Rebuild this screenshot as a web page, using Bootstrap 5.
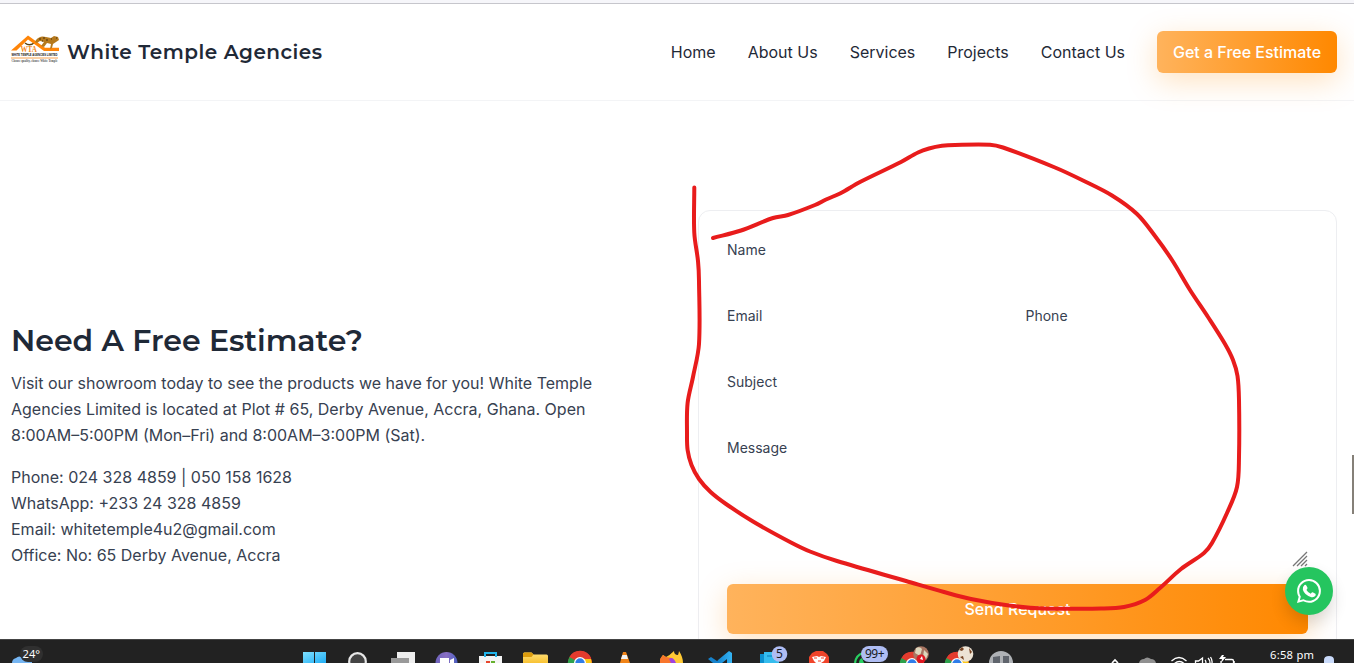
<!DOCTYPE html>
<html lang="en">
<head>
<meta charset="utf-8">
<title>White Temple Agencies</title>
<link href="https://cdn.jsdelivr.net/npm/bootstrap@5.3.0/dist/css/bootstrap.min.css" rel="stylesheet">
<style>
body{font-family:Inter,"Liberation Sans",sans-serif;color:#374151;height:663px;overflow:hidden;background:#fff;line-height:26px}
.edge{height:4px;background:#f6f6fa;border-bottom:1px solid #c6c6cc}
.site-head{height:97px;border-bottom:1px solid #f3f4f6;padding:0 17px 0 11px}
.site-head,.brand-name,h1{color:#1f2937}
.brand-name,h1{font-family:Montserrat,Inter,sans-serif;font-weight:600;white-space:nowrap}
.brand-name{font-size:20px;letter-spacing:.5px}
h1{font-size:30px;line-height:36px;margin-bottom:11px}
.logo{overflow:visible}
.links{gap:32px}
.cta{background:linear-gradient(90deg,#ffb35c,#ff8800);color:#fff;border:0;border-radius:6px;font-weight:500;box-shadow:0 8px 30px rgba(255,138,0,.25)}
.cta:hover{color:#fff}
.cta-head{width:180px;height:42px;padding:0}
.cta-send{height:50px}
.main-area{height:538px;padding:0 17px 0 11px;overflow:hidden}
.info-col{width:607px;padding-top:222px}
.form-col{width:639px;padding-top:109px}
.form-panel{border:1px solid #edeef1;border-radius:12px;padding:29px 28px;height:453px}
.form-panel label{font-size:14px;line-height:20px;height:66px;display:block}
.form-panel .msg{height:100px}
.grip{height:29px;margin-bottom:17px}
.taskbar{height:24px;background:#222;border-top:1px solid #444;position:relative}
.taskbar svg,.marker{display:block}
.marker{position:absolute;inset:0;pointer-events:none}
.chat{position:absolute;left:1285px;top:567px;width:48px;height:48px;border-radius:50%;background:#25c55f;box-shadow:0 8px 16px rgba(0,0,0,.14)}
.scroll-thumb{position:absolute;right:0;top:455px;width:2px;height:59px;background:#858078}
.taskbar text{font-family:"Noto Sans","Open Sans",sans-serif}
</style>
<script src="https://cdn.jsdelivr.net/npm/bootstrap@5.3.0/dist/js/bootstrap.bundle.min.js"></script>
</head>
<body class="position-relative">
<div class="edge"></div>
<header class="site-head d-flex align-items-center justify-content-between">
  <div class="d-flex align-items-center gap-2">
    <svg class="logo" width="48" height="48" viewBox="0 0 48 48">
      <path d="M14 15q5 4 10-1" fill="none" stroke="#5c4310" stroke-width="1.4"/>
      <path d="M0 22.500 17 7.500l17 12.300h14v3.200H33L17 11.500 5.500 22.500z" fill="#ff8508"/>
      <path d="M25 12q4-5 10-3l5 1 3-2 4 1 1 3-3 2-3 2-1 4-2 1 1-5-4-1-3 4-3-1 3-4-4-1-3 2-2-1z" fill="#b5791d"/>
      <path d="M28 11h2m2-1h2m1 2h2m3-1h1m-10 2h1m13-3h1" stroke="#49310c" stroke-width="1.1"/>
      <text x="9.500" y="24.300" font-family="Liberation Serif" font-weight="700" font-size="7.600" textLength="16.500" lengthAdjust="spacingAndGlyphs" fill="#f58a1c">WTA</text>
      <text x=".5" y="28.300" font-family="Liberation Sans" font-weight="700" font-size="3" textLength="46" lengthAdjust="spacingAndGlyphs" fill="#111">WHITE TEMPLE AGENCIES LIMITED</text>
      <path d="M0 30h47" stroke="#f7a04c" stroke-width="1"/>
      <text x=".5" y="34" font-family="Liberation Serif" font-weight="700" font-size="3.400" textLength="46" lengthAdjust="spacingAndGlyphs" fill="#555">Choose quality, choose White Temple</text>
    </svg>
    <span class="brand-name">White Temple Agencies</span>
  </div>
  <nav class="links d-flex align-items-center">
    <span>Home</span><span>About Us</span><span>Services</span><span>Projects</span><span>Contact Us</span>
    <button class="btn cta cta-head">Get a Free Estimate</button>
  </nav>
</header>
<main class="main-area d-flex justify-content-between">
  <section class="info-col">
    <h1>Need A Free Estimate?</h1>
    <p class="mb-3">Visit our showroom today to see the products we have for you! White Temple<br>Agencies Limited is located at Plot # 65, Derby Avenue, Accra, Ghana. Open<br>8:00AM–5:00PM (Mon–Fri) and 8:00AM–3:00PM (Sat).</p>
    <div>Phone: 024 328 4859 | 050 158 1628</div>
    <div>WhatsApp: +233 24 328 4859</div>
    <div>Email: whitetemple4u2@gmail.com</div>
    <div>Office: No: 65 Derby Avenue, Accra</div>
  </section>
  <section class="form-col">
    <form class="form-panel">
      <label>Name</label>
      <div class="row gx-3"><div class="col-6"><label>Email</label></div><div class="col-6"><label>Phone</label></div></div>
      <label>Subject</label>
      <label class="msg">Message</label>
      <div class="grip d-flex justify-content-end align-items-end">
        <svg width="16" height="18" viewBox="0 0 16 18"><path d="M1 17 15 3M5 17 15 7M9 17l6-6M13 17l2-2" stroke="#777" stroke-width="1.3"/></svg>
      </div>
      <button type="button" class="btn cta cta-send w-100">Send Request</button>
    </form>
  </section>
</main>
<div class="taskbar">
  <svg width="1354" height="23" viewBox="0 640 1354 23">
    <defs>
      <linearGradient id="win" x2="1" y2="1"><stop stop-color="#7ee0ff"/><stop offset="1" stop-color="#21aef5"/></linearGradient>
      <linearGradient id="folder" x2="0" y2="1"><stop stop-color="#ffe07a"/><stop offset="1" stop-color="#f8c233"/></linearGradient>
      <linearGradient id="teams" x2="1"><stop stop-color="#6d63bd"/><stop offset=".5" stop-color="#8a6fc4"/><stop offset="1" stop-color="#4b5fc0"/></linearGradient>
      <linearGradient id="vsc" x2="1"><stop stop-color="#0f7ecb"/><stop offset="1" stop-color="#35b5f5"/></linearGradient>
      <g id="chrome"><circle r="12" fill="#e33b2e"/><path d="M-10.5-6A12 12 0 0 0 0 12V0z" fill="#2da14c"/><path d="M0 0V12A12 12 0 0 0 11-4H0z" fill="#fbc816"/><path d="M-10.5-6A12 12 0 0 1 11-5H0z" fill="#e33b2e"/><circle r="6" fill="#fff"/><circle r="4.7" fill="#2f7de9"/></g>
    </defs>
    <path d="M12 663q0-4 4-5 3-3 7 0l9 3v2z" fill="#75b5f2"/>
    <rect x="20" y="646" width="23" height="16" rx="8" fill="#303030"/>
    <text x="22.5" y="658" font-size="11.2" fill="#fff">24°</text>
    <path d="M303 652h11v11h-11zM315 652h11v11h-11z" fill="url(#win)"/>
    <circle cx="357.500" cy="661.500" r="8.300" fill="#444" stroke="#e8e8e8" stroke-width="2.200"/>
    <path d="M397 652h18v11h-18z" fill="#eee"/><path d="M391 658h18v5h-18z" fill="#999"/>
    <circle cx="446.500" cy="663" r="11" fill="url(#teams)"/><path d="M440 658h9v5h-9zM450 660l4-2v5h-4z" fill="#fff"/>
    <path d="M479 656h23v7h-23z" fill="#f5f5f5"/><path d="M485 657v-4h11v4" fill="none" stroke="#22b5eb" stroke-width="2"/><path d="M486 661h4v2h-4z" fill="#e8462c"/><path d="M491 661h4v2h-4z" fill="#66b12f"/>
    <path d="M523 663v-9q0-1.500 1.500-1.500h7l2 2h13q1.500 0 1.500 1.500v7z" fill="url(#folder)"/><path d="M523 657v-3q0-1.500 1.500-1.500h7l2 2-2 2.500z" fill="#dc9c0d"/>
    <use href="#chrome" x="580" y="663"/>
    <path d="M623 652h3l4 11h-10z" fill="#f08317"/><path d="M622.300 655h4.500l1.200 4h-7z" fill="#f2f2f2"/>
    <path d="M660 663q0-5 3-8l3 2q4-2 8-6 0 4 4 4 1-3 1-4 4 6 4 12z" fill="#ffc934"/><path d="M660 663v-4l3-4 3 2 6 1 2 5z" fill="#f8762c"/><path d="M669 659q4-3 7 4h-5z" fill="#9d42df"/>
    <path d="M718 660l11-9 3 2v10h-5v-4l-5 4h-6z" fill="url(#vsc)"/><path d="M708 659l3-2 9 6h-7z" fill="#1682cc"/>
    <path d="M760 654h18v9h-18z" fill="#0b8fce"/><path d="M764 652h15v11h-15z" fill="#35bced"/><path d="M767 656h8" stroke="#087ab6"/><circle cx="779.500" cy="654" r="7.800" fill="#afbdf3"/><text x="776" y="658.300" font-size="12" fill="#151923">5</text>
    <path d="M809 663v-6l3-4 4-2h7l4 3 2 3v6z" fill="#f0442a"/><path d="M812 657l5-1 2 1 2-1 5 1-2 4-3 2h-5l-2-2z" fill="#fff"/><path d="M814 658h3m4 0h3m-6 3h3" stroke="#f0442a"/>
    <path d="M855 663q1-8 8-10" fill="none" stroke="#28cf61" stroke-width="2.200"/><path d="M859 663q0-4 3-5l2 5z" fill="#28cf61"/>
    <rect x="861" y="646" width="27" height="16" rx="8" fill="#afbdf3"/><text x="865" y="658.300" font-size="12" textLength="19.500" fill="#151923">99+</text>
    <use href="#chrome" x="912" y="664"/><circle cx="921" cy="654" r="7.800" fill="#a87562"/><path d="M916 648q4-2 6 1l-2 7-5-3zM924 650l4 4-2 5-3-2z" fill="#ddd7bd"/><circle cx="921" cy="659" r="4.500" fill="#df1721"/><path d="M920 659l2-3 1 4z" fill="#fff"/>
    <use href="#chrome" x="957" y="664"/><circle cx="965.500" cy="654" r="7.800" fill="#ede3d4"/><path d="M959 650l3-3 2 2-2 2zM969 648l3 4-2 2zM960 657l3-1 1 4z" fill="#764221"/>
    <circle cx="1001" cy="663" r="12" fill="#afb2b6"/><path d="M993 663v-6l7-1v7zM1003 663v-7h6v7z" fill="#5f646c"/>
    <path d="M1112 663l3-3 3 3" fill="none" stroke="#fff" stroke-width="1.600"/>
    <path d="M1139 663q1-4 5-4 3-3 7 0 4 0 5 4z" fill="#909090"/>
    <g fill="none" stroke="#fff" stroke-width="1.300"><path d="M1171.500 661q7.500-7 15 0M1174.500 663.500q5-4 9.500 0"/><path d="M1195.500 663v-2h3l4-3v5M1205 660q1 1 1 3M1208 658q2 2 2 5M1210.500 657q2 3 1.500 6"/><path d="M1225 659.500h7q1.500 0 1.500 1.500v2M1221 663v-2M1234 662h1"/></g>
    <path d="M1222 655l-3 4h3l-1 4 5-6h-3l1-2z" fill="#fff"/>
    <text x="1270" y="658.500" font-size="11.200" textLength="44" fill="#fff">6:58 pm</text>
    <path d="M1324 663v-3q0-4 5-4t5 4v3z" fill="#c9dafa"/>
  </svg>
</div>
<div class="chat d-flex align-items-center justify-content-center">
  <svg width="24" height="24" viewBox="0 0 16 16" fill="#fff"><path d="M13.601 2.326A7.854 7.854 0 0 0 7.994 0C3.627 0 .068 3.558.064 7.926c0 1.399.366 2.760 1.057 3.965L0 16l4.204-1.102a7.933 7.933 0 0 0 3.790.965h.004c4.368 0 7.926-3.558 7.930-7.930A7.898 7.898 0 0 0 13.600 2.326zM7.994 14.521a6.573 6.573 0 0 1-3.356-.920l-.240-.144-2.494.654.666-2.433-.156-.251a6.560 6.560 0 0 1-1.007-3.505c0-3.626 2.957-6.584 6.591-6.584a6.560 6.560 0 0 1 4.660 1.931 6.557 6.557 0 0 1 1.928 4.660c-.004 3.639-2.961 6.592-6.592 6.592z"/><path d="M5 4q.8-.5 1.200.3l.8 1.600q.1.500-.7 1.400 1 1.800 2.900 2.500.8-1 1.200-.9l1.900.9q.4.400 0 1.400-1 1.300-2.700.9-4.500-1.200-5.700-5Q3.600 5 5 4z"/></svg>
</div>
<div class="scroll-thumb"></div>
<svg class="marker" width="1354" height="639"><path id="stroke" fill="none" stroke="#e81c1c" stroke-width="4" stroke-linecap="round" stroke-linejoin="round"/></svg>
<script>
// Freehand marker line, smoothed through its sampled points.
const p=[[713,238],[741,230.5],[773,218],[788,215],[815,205],[826,199.5],[840,193.5],[860,182],[901,162],[918,152.5],[929,148.5],[942,145.8],[955,144.900],[990,144.700],[1003,147.5],[1055,167.5],[1083,180.5],[1112,195.5],[1137,214],[1155,236],[1172,260],[1190,290],[1208,317],[1225,344],[1233,360],[1237.5,376],[1239,400],[1239,457],[1237,487],[1227,513],[1212,543],[1204,553],[1181,569],[1160,588],[1145,600],[1124,607],[1101,608.5],[1043.5,608.5],[1009,605.5],[971,599],[944,592],[906,581],[837,561],[810,551.5],[791,542.5],[753,521.5],[726,504],[710.6,492],[699,479],[691.5,465],[687.6,450],[687,433],[687.6,403],[693,377],[699,344],[699,281],[698,261],[694.3,233],[694.3,187.5]];
let d='M'+p[0];
for(let i=0;i<p.length-1;i++){
  const a=p[i-1]||p[i],b=p[i],c=p[i+1],e=p[i+2]||c,k=Math.hypot(c[0]-b[0],c[1]-b[1])/3;
  const t=(m,n)=>{const l=Math.hypot(n[0]-m[0],n[1]-m[1])||1;return[(n[0]-m[0])/l*k,(n[1]-m[1])/l*k]};
  const u=t(a,c),v=t(b,e);
  d+='C'+[b[0]+u[0],b[1]+u[1],c[0]-v[0],c[1]-v[1],c[0],c[1]];
}
document.getElementById('stroke').setAttribute('d',d);
</script>
</body>
</html>
